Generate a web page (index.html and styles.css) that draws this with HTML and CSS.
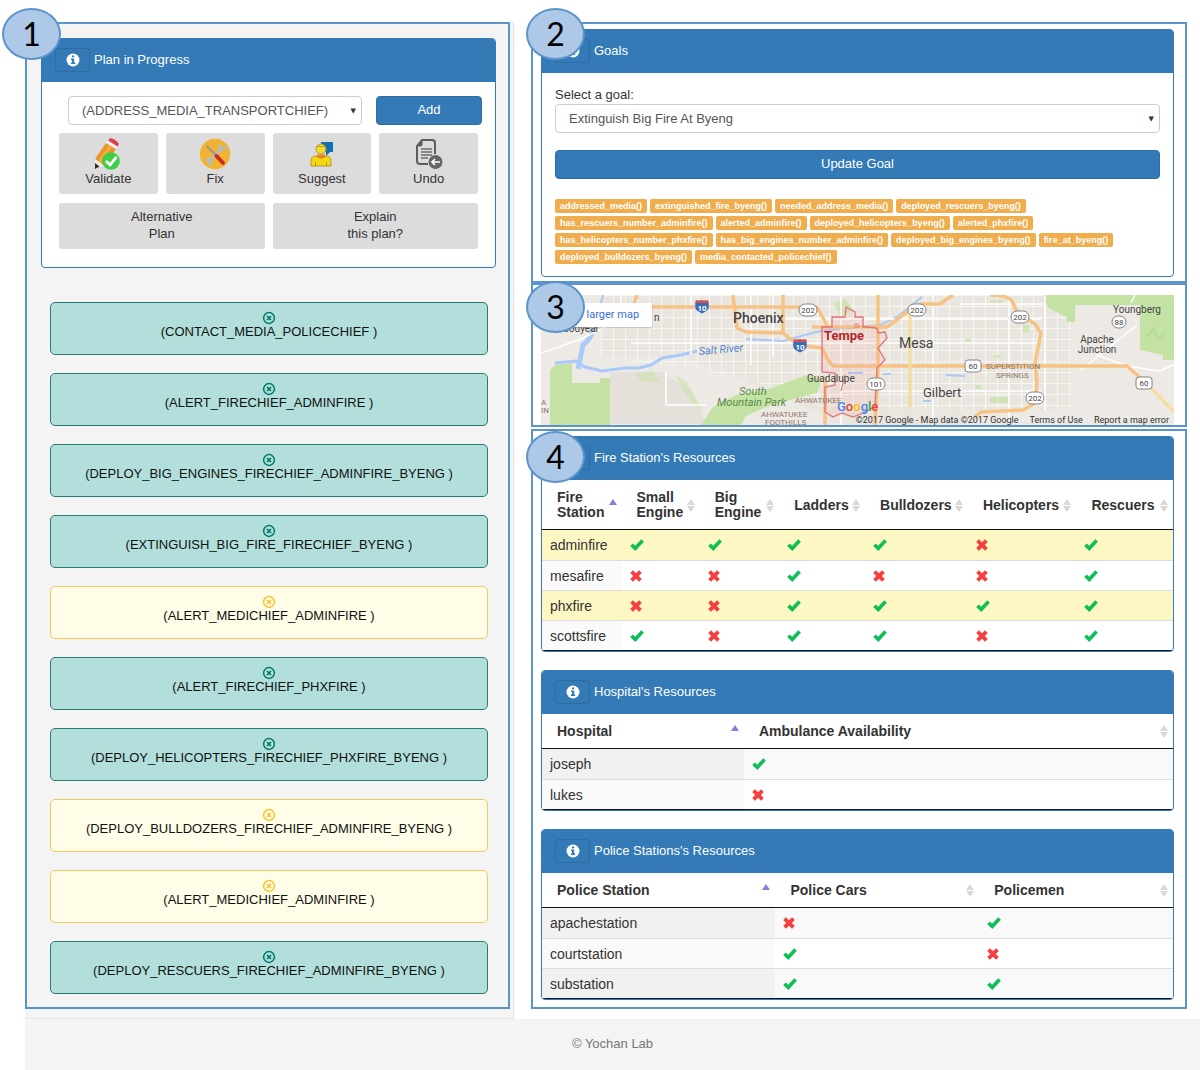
FILE: index.html
```html
<!DOCTYPE html>
<html lang="en">
<head>
  <meta charset="UTF-8">
  <meta name="viewport" content="width=device-width, initial-scale=1">
  <title>Plan in Progress</title>
  <link rel="stylesheet" href="styles.css">
</head>
<body>

<!-- shared icons -->
<svg class="defs" aria-hidden="true">
  <symbol id="info" viewBox="0 0 14 14">
    <circle cx="7" cy="7" r="6.5" fill="#fff"/>
    <path d="M6 2.4h2.2v1.9H6zM5 5.6h3.2v4h1v1.5H5V9.6h1V7H5z" fill="#337ab7"/>
  </symbol>
  <symbol id="yes" viewBox="0 0 14 12">
    <path d="M.2 7 2.7 4.400 5.200 6.700 11.300.2 13.900 2.700 5.300 11.900Z" fill="#10be58"/>
  </symbol>
  <symbol id="no" viewBox="0 0 14 12">
    <path d="M2.9.3 6 3.300 9.100.3 11.800 2.900 8.800 6 11.800 9.100 9.100 11.700 6 8.700 2.900 11.700.2 9.100 3.200 6 .2 2.900Z" fill="#f5403f"/>
  </symbol>
  <symbol id="remove" viewBox="0 0 14 14">
    <circle cx="7" cy="7" r="5.4" fill="none" stroke="currentColor" stroke-width="1.5"/>
    <path d="M5 5l4 4M9 5l-4 4" stroke="currentColor" stroke-width="1.7"/>
  </symbol>
  <symbol id="interstate" viewBox="0 0 16 16">
    <path d="M2 1Q5 2 8 1Q11 2 14 1Q17 9 13 12L8 15L3 12Q-1 9 2 1Z" fill="#3b6db5" stroke="#fff" stroke-width=".6"/>
    <path d="M2 1Q5 2 8 1Q11 2 14 1L14.8 4H1.200Z" fill="#d2504f"/>
    <text x="8" y="11.500" text-anchor="middle" class="shield-num light">10</text>
  </symbol>
</svg>

<main class="page">
  <div class="side">
    <section class="box plan">
      <span class="badge badge-1">1</span>
      <div class="panel">
        <div class="panel-heading">
          <button class="info" aria-label="About the plan"><svg><use href="#info"/></svg></button>
          <span>Plan in Progress</span>
        </div>
        <div class="plan-body">
          <div class="add-row">
            <span class="select">
              <select aria-label="Action">
                <option>(ADDRESS_MEDIA_TRANSPORTCHIEF)</option>
              </select>
            </span>
            <button class="btn-primary">Add</button>
          </div>
          <div class="tools">
            <button class="tool">
              <svg viewBox="0 0 32 32">
                <path d="M3 21 14 5 24 11 12 28Z" fill="#e8962e"/>
                <path d="M6 23 17 7 20 9 9 26Z" fill="#f3aa3f"/>
                <path d="M16 3 18 0Q24 1 27 6L25 9Z" fill="#d7434e"/>
                <path d="M14 5 16 2.500 25.500 8.500 24 11Z" fill="#f6f0ea"/>
                <path d="M3 21 12 27.500 3 31Z" fill="#f6ecdf"/>
                <path d="M3 25 7.500 28.500 3 31Z" fill="#2b2b2b"/>
                <circle cx="19" cy="23" r="8.800" fill="#3dcf46"/>
                <path d="M14 23l4 4 6.500-8" fill="none" stroke="#fff" stroke-width="2.800"/>
              </svg>
              Validate
            </button>
            <button class="tool">
              <svg viewBox="0 0 32 32">
                <circle cx="16" cy="16" r="15.200" fill="#f0b432"/>
                <path d="M9 24 23 10" stroke="#b3bcbe" stroke-width="2.600"/>
                <path d="M24 6 22 8 24 10 27 8Q28 13 23 13Q19 13 19 9Q20 6 24 6Z" fill="#b3bcbe"/>
                <path d="M6 22Q8 19 11 20Q14 22 13 25Q12 28 8 28L10 25 8 23Z" fill="#b3bcbe"/>
                <path d="M7.500 8 17 17" stroke="#8d979d" stroke-width="1.800"/>
                <path d="M17.500 18 24 25" stroke="#cf2a22" stroke-width="4" stroke-linecap="round"/>
              </svg>
              Fix
            </button>
            <button class="tool">
              <svg viewBox="0 0 32 32">
                <path d="M15 4h12v10h-3l-4 4v-4h-5Z" fill="#1271b0"/>
                <path d="M5 28v-5q0-5 5-5h10q5 0 5 5v5Z" fill="#f5d713" stroke="#a58a2a" stroke-width=".8"/>
                <path d="M9.500 24v4M20.500 24v4" stroke="#a58a2a" stroke-width=".8"/>
                <path d="M11 16.500h8v3l-4 1.500-4-1.500Z" fill="#e58a20"/>
                <circle cx="15" cy="11" r="5" fill="#f7dd2b" stroke="#a58a2a" stroke-width=".8"/>
                <path d="M10 8.500h8l2 2" stroke="#b59a2a" stroke-width=".9" fill="none"/>
              </svg>
              Suggest
            </button>
            <button class="tool">
              <svg viewBox="0 0 32 32">
                <path d="M15 26H7q-3 0-3-3V8L9 2H19q3 0 3 3V16" fill="none" stroke="#5d5d5d" stroke-width="2"/>
                <path d="M3.500 8.500 9.500 1.500V6q0 2.500-2.500 2.500Z" fill="#5d5d5d"/>
                <path d="M8 11h11M8 14h11M8 17h11M8 20h7" stroke="#6d6d6d" stroke-width="1.400"/>
                <circle cx="22.500" cy="24" r="7" fill="#666"/>
                <path d="M27 24h-8M22 21l-3 3 3 3" fill="none" stroke="#fff" stroke-width="1.700"/>
              </svg>
              Undo
            </button>
            <button class="tool wide">Alternative<br>Plan</button>
            <button class="tool wide">Explain<br>this plan?</button>
          </div>
        </div>
      </div>

      <ul class="steps">
        <li class="step"><svg><use href="#remove"/></svg>(CONTACT_MEDIA_POLICECHIEF )</li>
        <li class="step"><svg><use href="#remove"/></svg>(ALERT_FIRECHIEF_ADMINFIRE )</li>
        <li class="step"><svg><use href="#remove"/></svg>(DEPLOY_BIG_ENGINES_FIRECHIEF_ADMINFIRE_BYENG )</li>
        <li class="step"><svg><use href="#remove"/></svg>(EXTINGUISH_BIG_FIRE_FIRECHIEF_BYENG )</li>
        <li class="step suggested"><svg><use href="#remove"/></svg>(ALERT_MEDICHIEF_ADMINFIRE )</li>
        <li class="step"><svg><use href="#remove"/></svg>(ALERT_FIRECHIEF_PHXFIRE )</li>
        <li class="step"><svg><use href="#remove"/></svg>(DEPLOY_HELICOPTERS_FIRECHIEF_PHXFIRE_BYENG )</li>
        <li class="step suggested"><svg><use href="#remove"/></svg>(DEPLOY_BULLDOZERS_FIRECHIEF_ADMINFIRE_BYENG )</li>
        <li class="step suggested"><svg><use href="#remove"/></svg>(ALERT_MEDICHIEF_ADMINFIRE )</li>
        <li class="step"><svg><use href="#remove"/></svg>(DEPLOY_RESCUERS_FIRECHIEF_ADMINFIRE_BYENG )</li>
      </ul>
    </section>
  </div>

  <div class="content">
    <section class="box goals">
      <span class="badge badge-2">2</span>
      <div class="panel">
        <div class="panel-heading">
          <button class="info" aria-label="About goals"><svg><use href="#info"/></svg></button>
          <span>Goals</span>
        </div>
        <div class="goals-body">
          <label for="goal">Select a goal:</label>
          <span class="select">
            <select id="goal">
              <option>Extinguish Big Fire At Byeng</option>
            </select>
          </span>
          <button class="btn-primary">Update Goal</button>
          <div class="tags">
            <span>addressed_media()</span>
            <span>extinguished_fire_byeng()</span>
            <span>needed_address_media()</span>
            <span>deployed_rescuers_byeng()</span>
            <span>has_rescuers_number_adminfire()</span>
            <span>alerted_adminfire()</span>
            <span>deployed_helicopters_byeng()</span>
            <span>alerted_phxfire()</span>
            <span>has_helicopters_number_phxfire()</span>
            <span>has_big_engines_number_adminfire()</span>
            <span>deployed_big_engines_byeng()</span>
            <span>fire_at_byeng()</span>
            <span>deployed_bulldozers_byeng()</span>
            <span>media_contacted_policechief()</span>
          </div>
        </div>
      </div>
    </section>

    <section class="box map-box">
      <span class="badge badge-3">3</span>
      <div class="map">
        <svg class="map-art" viewBox="0 0 633 130" preserveAspectRatio="xMidYMid slice">
          <defs>
            <pattern id="streets" width="12" height="11" patternUnits="userSpaceOnUse">
              <path d="M0 .5H12M.5 0V11" stroke="#f8f6f2" stroke-width="1"/>
            </pattern>
          </defs>
          <rect width="633" height="130" fill="#edeae5"/>
          <path d="M60 0H420V130H300L240 100 190 80 140 62 60 60ZM420 0H530V115H420Z" fill="#e9e5df"/>
          <path d="M60 0H530V115H290L200 82 60 62Z" fill="url(#streets)"/>
          <path d="M69 77H120L150 95 165 129H69Z" fill="#e6e0da"/>

          <!-- parks -->
          <g fill="#c3e2a4">
            <path d="M9 75 14 70 31 68V88H59V83H69V130H9Z"/>
            <path d="M160 130 172 112 195 100 225 95 266 80 281 84 276 98 252 104 225 112 205 121 200 130Z"/>
            <path d="M502 0 507 13 526 22V27H534V10H599V55L622 60V65H633V0Z"/>
            <path d="M292 8 304 4 312 14 300 22Z" opacity=".7"/>
            <path d="M94 78 112 76 120 88 100 86ZM134 80 145 86 162 116 150 108Z" opacity=".5"/>
            <path d="M449 102H467V108H449ZM434 90H440V94H434ZM482 30H488V37H482ZM424 44H430V47H424Z" opacity=".7"/>
            <path d="M449 5H462V8H449ZM452 60H460V63H452Z" opacity=".5"/>
          </g>
          <path d="M606 42l6-8 5 10 7-6" fill="none" stroke="#b5da92" stroke-width="2"/>

          <!-- water -->
          <g fill="none" stroke="#a9c9f7">
            <path d="M62 0 58 15" stroke-width="2"/>
            <path d="M52 34Q50 44 42 50L37 74" stroke-width="5"/>
            <path d="M14 68 35 66 44 72 61 76 84 73" stroke-width="3"/>
            <path d="M84 73 98 73 110 70 121 63 140 60 156 56" stroke-width="3"/>
            <path d="M205 44 242 46 279 36 339 30 356 22 381 2" stroke-width="2"/>
            <path d="M307 78H322M342 79H350M405 80 424 81M382 106H390" stroke-width="2"/>
          </g>

          <!-- minor roads -->
          <g fill="none" stroke="#fff" stroke-width="1.500">
            <path d="M0 58 40 44 80 24 80 0M125 77V110H165M150 0V60M210 0V70M232 0V62M300 0V130M392 0V130M468 0V130"/>
            <path d="M90 48H500M200 24H500M300 96H500M419 9H502M504 0V115M540 75 596 30M556 60 586 71 618 76 633 70M590 8 594 0"/>
          </g>

          <!-- freeways -->
          <g fill="none" stroke="#f7c283" stroke-width="3.500" stroke-linejoin="round">
            <path d="M92 12H276L287 32M96 0 92 12M192 0 196 33 205 37 242 38 257 50 281 53 287 65 292 71H586L606 89"/>
            <path d="M242 0V38M337 0V75L334 130M271 32H346L366 17 380 9H399L412 0M284 82V130"/>
            <path d="M449 0Q469 0 472 8L476 17 494 29 500 38 494 68 496 88 494 108 482 115 440 117 434 122"/>
          </g>
          <path d="M369 18V112M606 89 633 117" fill="none" stroke="#f6dc9a" stroke-width="3"/>

          <path d="M281 32H291V22H304L305 12 314 17V22H322V32H326L336 33 337 38 344 37 346 43 337 53 344 65 336 73 334 112 322 118 312 122 301 118 292 122 284 117V92L294 90V78L281 77Z" fill="#f5a89c" fill-opacity=".17" stroke="#df7375" stroke-width="1.300"/>
          <path d="M304 80 300 96M313 30q4-3 5 2h-5" fill="none" stroke="#df7375"/>

          <use href="#interstate" x="153" y="4" width="16" height="16"/>
          <use href="#interstate" x="251" y="43" width="16" height="16"/>
          <g fill="#fff" stroke="#777" stroke-width=".9">
            <rect x="258" y="9" width="18" height="12" rx="6"/>
            <rect x="367" y="9" width="18" height="12" rx="6"/>
            <rect x="470" y="16" width="18" height="12" rx="6"/>
            <rect x="485" y="97" width="18" height="12" rx="6"/>
            <rect x="326" y="83" width="18" height="12" rx="6"/>
            <rect x="571" y="21" width="14" height="12" rx="6"/>
            <rect x="424" y="65" width="16" height="12" rx="3"/>
            <rect x="595" y="82" width="16" height="12" rx="3"/>
          </g>
          <g class="shield-num" text-anchor="middle">
            <text x="267" y="18">202</text><text x="376" y="18">202</text>
            <text x="479" y="25">202</text><text x="494" y="106">202</text>
            <text x="335" y="92">101</text><text x="578" y="30">88</text>
            <text x="432" y="74">60</text><text x="603" y="91">60</text>
          </g>

          <g class="place">
            <text x="192" y="28" class="city strong">Phoenix</text>
            <text x="358" y="53" class="city">Mesa</text>
            <text x="382" y="102" class="town">Gilbert</text>
            <text x="283" y="45" class="town tempe">Tempe</text>
            <text x="266" y="87">Guadalupe</text>
            <text x="58" y="37" text-anchor="end">Goodyear</text>
            <text x="113" y="26">n</text>
            <text x="572" y="18">Youngberg</text>
            <text x="556" y="48" text-anchor="middle">Apache</text>
            <text x="556" y="58" text-anchor="middle">Junction</text>
          </g>
          <g class="area">
            <text x="254" y="108">AHWATUKEE</text>
            <text x="220" y="122">AHWATUKEE</text>
            <text x="224" y="130">FOOTHILLS</text>
            <text x="445" y="74">SUPERSTITION</text>
            <text x="455" y="83">SPRINGS</text>
            <text x="0" y="110">A</text>
            <text x="0" y="118">IN</text>
          </g>
          <text x="198" y="100" class="park">South</text>
          <text x="176" y="111" class="park">Mountain Park</text>
          <text x="158" y="60" class="river" transform="rotate(-5 158 60)">Salt River</text>
          <text x="296" y="116" class="google"><tspan fill="#4285f4">G</tspan><tspan fill="#ea4335">o</tspan><tspan fill="#fbbc05">o</tspan><tspan fill="#4285f4">g</tspan><tspan fill="#34a853">l</tspan><tspan fill="#ea4335">e</tspan></text>
        </svg>
        <a class="larger" href="#">View larger map</a>
        <div class="credits">
          <span>©2017 Google - Map data ©2017 Google</span>
          <a href="#">Terms of Use</a>
          <a href="#">Report a map error</a>
        </div>
      </div>
    </section>

    <section class="box resources">
      <span class="badge badge-4">4</span>
      <div class="panel">
        <div class="panel-heading">
          <button class="info" aria-label="About fire stations"><svg><use href="#info"/></svg></button>
          <span>Fire Station's Resources</span>
        </div>
        <table class="fire">
          <colgroup><col class="c-station"><col class="c-small"><col class="c-big"><col class="c-ladders"><col class="c-bulldozers"><col class="c-helicopters"><col></colgroup>
          <thead>
            <tr><th class="asc">Fire Station</th><th>Small Engine</th><th>Big Engine</th><th>Ladders</th><th>Bulldozers</th><th>Helicopters</th><th>Rescuers</th></tr>
          </thead>
          <tbody>
            <tr class="used">
              <td>adminfire</td>
              <td><svg><use href="#yes"/></svg></td>
              <td><svg><use href="#yes"/></svg></td>
              <td><svg><use href="#yes"/></svg></td>
              <td><svg><use href="#yes"/></svg></td>
              <td><svg><use href="#no"/></svg></td>
              <td><svg><use href="#yes"/></svg></td>
            </tr>
            <tr>
              <td>mesafire</td>
              <td><svg><use href="#no"/></svg></td>
              <td><svg><use href="#no"/></svg></td>
              <td><svg><use href="#yes"/></svg></td>
              <td><svg><use href="#no"/></svg></td>
              <td><svg><use href="#no"/></svg></td>
              <td><svg><use href="#yes"/></svg></td>
            </tr>
            <tr class="used">
              <td>phxfire</td>
              <td><svg><use href="#no"/></svg></td>
              <td><svg><use href="#no"/></svg></td>
              <td><svg><use href="#yes"/></svg></td>
              <td><svg><use href="#yes"/></svg></td>
              <td><svg><use href="#yes"/></svg></td>
              <td><svg><use href="#yes"/></svg></td>
            </tr>
            <tr>
              <td>scottsfire</td>
              <td><svg><use href="#yes"/></svg></td>
              <td><svg><use href="#no"/></svg></td>
              <td><svg><use href="#yes"/></svg></td>
              <td><svg><use href="#yes"/></svg></td>
              <td><svg><use href="#no"/></svg></td>
              <td><svg><use href="#yes"/></svg></td>
            </tr>
          </tbody>
        </table>
      </div>

      <div class="panel">
        <div class="panel-heading">
          <button class="info" aria-label="About hospitals"><svg><use href="#info"/></svg></button>
          <span>Hospital's Resources</span>
        </div>
        <table class="striped">
          <colgroup><col class="c-hospital"><col></colgroup>
          <thead>
            <tr><th class="asc">Hospital</th><th>Ambulance Availability</th></tr>
          </thead>
          <tbody>
            <tr>
              <td>joseph</td>
              <td><svg><use href="#yes"/></svg></td>
            </tr>
            <tr>
              <td>lukes</td>
              <td><svg><use href="#no"/></svg></td>
            </tr>
          </tbody>
        </table>
      </div>

      <div class="panel">
        <div class="panel-heading">
          <button class="info" aria-label="About police stations"><svg><use href="#info"/></svg></button>
          <span>Police Stations's Resources</span>
        </div>
        <table class="striped">
          <colgroup><col class="c-police"><col class="c-cars"><col></colgroup>
          <thead>
            <tr><th class="asc">Police Station</th><th>Police Cars</th><th>Policemen</th></tr>
          </thead>
          <tbody>
            <tr>
              <td>apachestation</td>
              <td><svg><use href="#no"/></svg></td>
              <td><svg><use href="#yes"/></svg></td>
            </tr>
            <tr>
              <td>courtstation</td>
              <td><svg><use href="#yes"/></svg></td>
              <td><svg><use href="#no"/></svg></td>
            </tr>
            <tr>
              <td>substation</td>
              <td><svg><use href="#yes"/></svg></td>
              <td><svg><use href="#yes"/></svg></td>
            </tr>
          </tbody>
        </table>
      </div>
    </section>
  </div>
</main>

<footer>© Yochan Lab</footer>

</body>
</html>
```
FILE: styles.css
```css
* {
  box-sizing: border-box;
}
body {
  margin: 0;
  background: #fff;
  color: #333;
  font: 13px/18px "Liberation Sans", Arial, sans-serif;
}
button, select {
  font: inherit;
  color: inherit;
  margin: 0;
}
button {
  cursor: pointer;
}
.defs {
  position: absolute;
  width: 0;
  height: 0;
}

.page {
  display: grid;
  grid-template-columns: 489fr 656fr;
  gap: 17px;
  padding: 22px 13px 0 25px;
}
.side {
  display: flex;
  background: #f4f4f4;
  padding: 0 3px 9px 0;
  border: solid #e6e6e6;
  border-width: 0 1px 1px 0;
}
.content {
  padding-bottom: 10px;
}
.box {
  position: relative;
  border: 2px solid #5b93cb;
}
.plan {
  flex: 1;
  padding: 14px 12px 13px 14px;
}
.goals {
  padding: 5px 11px 4px 8px;
}
.map-box {
  padding: 10px 11px 0 8px;
}
.resources {
  margin-top: 2px;
  padding: 5px 11px 7px 8px;
  display: flex;
  flex-direction: column;
  gap: 18px;
}

/* numbered markers on the box corners */
.badge {
  position: absolute;
  z-index: 2;
  width: 59px;
  height: 52px;
  border: 2px solid #5b93cb;
  border-radius: 50%;
  background: #aec8e8;
  color: #000;
  font: 32px/48px Lato, sans-serif;
  text-align: center;
}
.badge-1 {
  left: -25px;
  top: -16px;
}
.badge-2 {
  left: -7px;
  top: -16px;
}
.badge-3 {
  left: -7px;
  top: -4px;
}
.badge-4 {
  left: -7px;
  top: 0;
}

.panel {
  border: 1px solid #337ab7;
  border-radius: 4px;
  background: #fff;
  overflow: hidden;
}
.panel-heading {
  display: flex;
  align-items: center;
  gap: 4px;
  height: 43px;
  padding: 0 13px 2px;
  background: #337ab7;
  color: #fff;
}
.info {
  width: 35px;
  height: 24px;
  padding: 0;
  border: 1px solid #2e6da4;
  border-radius: 3px;
  background: #337ab7;
}
.info svg {
  display: block;
  width: 14px;
  height: 14px;
  margin: 0 auto;
}

.select {
  position: relative;
  display: block;
  flex: 1;
}
.select::after {
  content: "▼";
  position: absolute;
  right: 6px;
  top: 6px;
  font: 7px/18px "DejaVu Sans", sans-serif;
  pointer-events: none;
}
select {
  display: block;
  width: 100%;
  height: 29px;
  padding: 0 13px;
  appearance: none;
  border: 1px solid #ccc;
  border-radius: 4px;
  background: #fff;
  color: #555;
}
.btn-primary {
  height: 29px;
  padding: 0 0 2px;
  border: 1px solid #2e6da4;
  border-radius: 4px;
  background: #337ab7;
  color: #fff;
}

.plan-body {
  padding: 14px 0 18px;
}
.add-row {
  display: flex;
  gap: 14px;
  padding: 0 13px 0 26px;
}
.add-row .btn-primary {
  width: 106px;
}
.tools {
  display: grid;
  grid-template-columns: repeat(4, 1fr);
  gap: 9px 8px;
  margin: 8px 17px 0;
}
.tool {
  height: 61px;
  padding: 0 0 2px;
  border: 0;
  border-radius: 3px;
  background: #dcdcdc;
  line-height: 17px;
}
.tool svg {
  display: block;
  width: 32px;
  height: 32px;
  margin: 0 auto;
}
.tool.wide {
  grid-column: span 2;
  height: 46px;
}

.steps {
  display: flex;
  flex-direction: column;
  gap: 18px;
  margin: 34px 8px 0 9px;
  padding: 0;
  list-style: none;
}
.step {
  height: 53px;
  padding-top: 8px;
  border: 1px solid #2b7a6f;
  border-radius: 5px;
  background: #b2dfdb;
  color: #111;
  line-height: 13px;
  text-align: center;
}
.step svg {
  display: block;
  width: 14px;
  height: 14px;
  margin: 0 auto;
  color: #00796b;
}
.step.suggested {
  border-color: #f3c95c;
  background: #fffde7;
}
.step.suggested svg {
  color: #fbc02d;
}

.goals-body {
  padding: 13px 13px 12px;
}
.goals-body label {
  display: block;
}
.goals-body .btn-primary {
  display: block;
  width: 100%;
  margin: 17px 0 20px;
}
.tags {
  display: flex;
  flex-wrap: wrap;
  gap: 3px;
}
.tags span {
  padding: 0 5px;
  border-radius: 2px;
  background: #f0ad4e;
  color: #fff;
  font-size: 9px;
  font-weight: bold;
  line-height: 14px;
}

.map {
  position: relative;
  font-family: Roboto, sans-serif;
}
.map-art {
  display: block;
  width: 100%;
  height: 130px;
}
.larger {
  position: absolute;
  left: 8px;
  top: 8px;
  padding: 0 13px 0 11px;
  background: #fff;
  box-shadow: 0 1px 2px rgba(0, 0, 0, .2);
  color: #3a6fd8;
  font-size: 11px;
  line-height: 24px;
  text-decoration: none;
}
.credits {
  position: absolute;
  right: 0;
  bottom: 0;
  display: flex;
  gap: 11px;
  padding: 0 5px;
  font-size: 9px;
  line-height: 10px;
}
.credits a {
  color: inherit;
  text-decoration: none;
}
.place {
  fill: #444;
  font-size: 10px;
}
.city {
  font-size: 14px;
}
.town {
  font-size: 13px;
}
.strong {
  font-weight: 500;
}
.tempe {
  fill: #b3282d;
  font-weight: bold;
}
.area {
  fill: #8c7568;
  font-size: 8px;
}
.park {
  fill: #5b8a45;
  font-size: 11px;
  font-style: italic;
}
.river {
  fill: #5584cc;
  font-size: 11px;
  font-style: italic;
}
.google {
  font-size: 13px;
  font-weight: 500;
}
.shield-num {
  fill: #444;
  font-size: 8px;
}
.shield-num.light {
  fill: #fff;
  font-weight: bold;
}

table {
  width: 100%;
  table-layout: fixed;
  border-collapse: separate;
  border-spacing: 0;
  border-bottom: 1px solid #112;
  font-size: 14px;
}
th {
  position: relative;
  padding: 10px 16px 9px 15px;
  border-bottom: 1px solid #111;
  line-height: 15px;
  text-align: left;
}
/* sort arrows */
th::before, th::after {
  content: "";
  position: absolute;
  right: 5px;
  border: solid transparent;
  border-width: 0 4px;
}
th::before {
  top: calc(50% - 6px);
  border-bottom: 6px solid #d8d8d8;
}
th::after {
  top: calc(50% + 1px);
  border-top: 6px solid #d8d8d8;
}
th.asc::before {
  border-bottom-color: #8280d6;
}
th.asc::after {
  display: none;
}
td {
  height: 30px;
  padding: 0 9px 0 8px;
  border-top: 1px solid #ddd;
}
tbody tr:first-child td {
  border-top: 0;
}
td svg {
  display: block;
  width: 14px;
  height: 12px;
}
td:first-child {
  background: #fafafa;
}
.striped tr:nth-child(odd) td {
  background: #f9f9f9;
}
.striped tr:nth-child(odd) td:first-child {
  background: #f1f1f1;
}
.used td, .used td:first-child {
  background: #fdf7c3;
}
.c-station, .c-big {
  width: 12.6%;
}
.c-small {
  width: 12.4%;
}
.c-ladders {
  width: 13.6%;
}
.c-bulldozers {
  width: 16.3%;
}
.c-helicopters {
  width: 17.2%;
}
.c-hospital {
  width: 32%;
}
.c-police {
  width: 37%;
}
.c-cars {
  width: 32.3%;
}

footer {
  margin-left: 25px;
  padding: 16px 0 17px;
  background: #f4f4f4;
  color: #777;
  text-align: center;
}
```
